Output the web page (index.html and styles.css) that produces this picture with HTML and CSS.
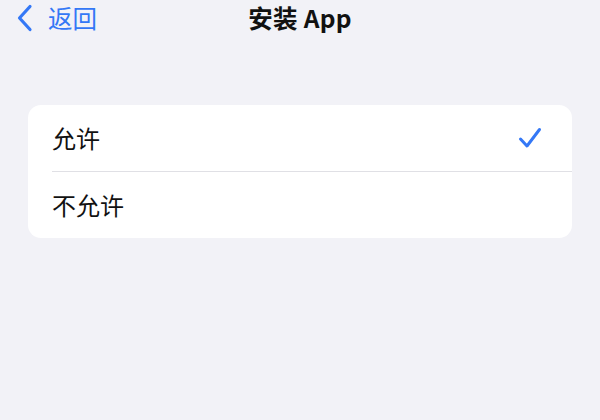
FILE: index.html
```html
<!DOCTYPE html>
<html lang="zh">
<head>
<meta charset="utf-8">
<link rel="stylesheet" href="styles.css">
</head>
<body>
<div class="screen">
  <header class="nav">
    <div class="back">
      <svg class="chev" width="17" height="28" viewBox="0 0 17 28"><path d="M14 2.5 L3.5 14 L14 25.5" fill="none" stroke="#3478f6" stroke-width="3.2" stroke-linecap="round" stroke-linejoin="round"/></svg>
      <span class="back-text">返回</span>
    </div>
    <div class="title">安装 App</div>
  </header>
  <div class="card">
    <div class="row">
      <span class="label">允许</span>
      <svg class="check" width="24" height="22" viewBox="0 0 24 22"><path d="M2.5 12 L9 19 L21.5 2.5" fill="none" stroke="#3478f6" stroke-width="3" stroke-linecap="round" stroke-linejoin="round"/></svg>
    </div>
    <div class="sep"></div>
    <div class="row">
      <span class="label">不允许</span>
    </div>
  </div>
</div>
</body>
</html>
```
FILE: styles.css
```css
html, body { margin: 0; padding: 0; }
body {
  width: 600px; height: 420px; overflow: hidden;
  background: #f2f2f7;
  font-family: "Noto Sans CJK SC", "Inter", "Liberation Sans", sans-serif;
}
.screen { display: flex; flex-direction: column; }
.nav {
  height: 40px;
  position: relative;
  display: flex; align-items: center; justify-content: center;
}
.back {
  position: absolute; left: 16px; top: 0; height: 36px;
  display: flex; align-items: center; gap: 15px;
  color: #3478f6;
}
.chev { display: block; }
.back-text { font-size: 24.5px; line-height: 1; }
.title {
  margin-top: -4px;
  font-size: 24.5px; font-weight: 600; color: #111; line-height: 1;
  letter-spacing: 0.3px;
}
.card {
  margin: 65px 28px 0 28px;
  background: #fff;
  border-radius: 13px;
}
.row {
  height: 66px;
  display: flex; align-items: center; justify-content: space-between;
  padding: 0 30px 0 24px;
}
.label { font-size: 24px; color: #111; line-height: 1; }
.sep { height: 1px; background: #e0e0e5; margin-left: 24px; }
.check { display: block; }
```
